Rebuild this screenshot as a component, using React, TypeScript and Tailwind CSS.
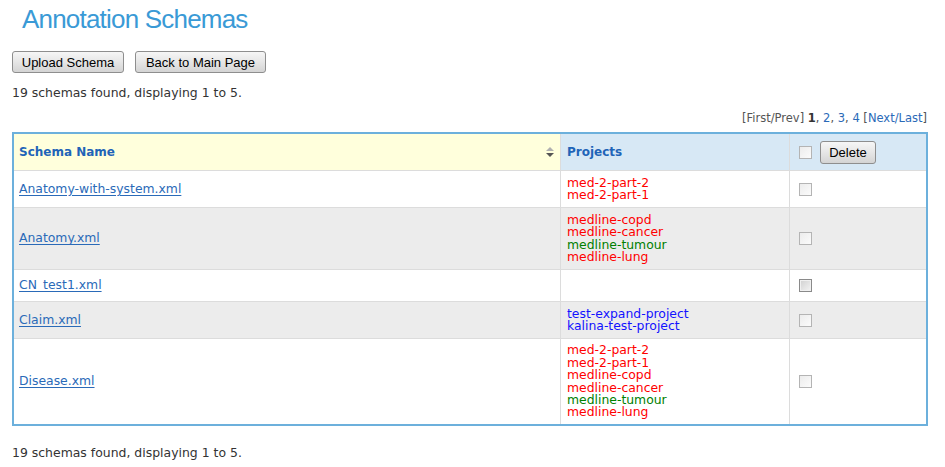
import React from "react";

const RED = "text-[#ff0000]";
const GREEN = "text-[#008000]";
const BLUE = "text-[#1212ff]";

type Proj = { name: string; c: string };

const rows: { name: string; h: string; bg: string; projects: Proj[]; dark?: boolean }[] = [
  {
    name: "Anatomy-with-system.xml",
    h: "h-[37px]",
    bg: "bg-white",
    projects: [
      { name: "med-2-part-2", c: RED },
      { name: "med-2-part-1", c: RED },
    ],
  },
  {
    name: "Anatomy.xml",
    h: "h-[62px]",
    bg: "bg-[#ececec]",
    projects: [
      { name: "medline-copd", c: RED },
      { name: "medline-cancer", c: RED },
      { name: "medline-tumour", c: GREEN },
      { name: "medline-lung", c: RED },
    ],
  },
  {
    name: "CN_test1.xml",
    h: "h-[32px]",
    bg: "bg-white",
    projects: [],
    dark: true,
  },
  {
    name: "Claim.xml",
    h: "h-[37px]",
    bg: "bg-[#ececec]",
    projects: [
      { name: "test-expand-project", c: BLUE },
      { name: "kalina-test-project", c: BLUE },
    ],
  },
  {
    name: "Disease.xml",
    h: "h-[85px]",
    bg: "bg-white",
    projects: [
      { name: "med-2-part-2", c: RED },
      { name: "med-2-part-1", c: RED },
      { name: "medline-copd", c: RED },
      { name: "medline-cancer", c: RED },
      { name: "medline-tumour", c: GREEN },
      { name: "medline-lung", c: RED },
    ],
  },
];

function Check({ dark }: { dark?: boolean }) {
  return (
    <span
      className={
        dark
          ? "block w-[13px] h-[13px] border border-[#8a8a8a] bg-gradient-to-br from-[#d0d0d0] to-[#f4f4f4] shadow-[inset_0_0_0_1px_#f0f0f0]"
          : "block w-[13px] h-[13px] border border-[#b4b4b4] bg-gradient-to-br from-[#ececec] to-[#fbfbfb]"
      }
    />
  );
}

function Btn({ children, className = "" }: { children: React.ReactNode; className?: string }) {
  return (
    <button
      className={
        "h-[22px] border border-[#8e8e8e] rounded-[3px] bg-gradient-to-b from-[#f6f6f6] via-[#e6e6e6] to-[#d4d4d4] text-[13px] text-black leading-none font-['Liberation_Sans',Arial,sans-serif] " +
        className
      }
    >
      {children}
    </button>
  );
}

export default function App() {
  return (
    <div className="w-[945px] h-[467px] bg-white font-['DejaVu_Sans',Verdana,sans-serif] text-[12.4px] text-[#333] overflow-hidden">
      <div className="pl-[22px] pt-[4px] h-[34px] text-[26px] leading-[30px] tracking-[-0.8px] text-[#3a9ad6] font-['Liberation_Sans',Arial,sans-serif]">
        Annotation Schemas
      </div>
      <div className="flex gap-[11px] pl-[12px] mt-[17px]">
        <Btn className="w-[112px]">Upload Schema</Btn>
        <Btn className="w-[131px]">Back to Main Page</Btn>
      </div>
      <div className="pl-[12px] mt-[12px] h-[16px] leading-[16px] text-[12.45px]">
        19 schemas found, displaying 1 to 5.
      </div>
      <div className="flex justify-end pr-[18px] mt-[10px] h-[14px] leading-[14px] text-[11.5px] text-[#555]">
        <span>
          [First/Prev] <b className="text-[#333]">1</b>,{" "}
          <span className="text-[#2a6ab8]">2</span>,{" "}
          <span className="text-[#2a6ab8]">3</span>,{" "}
          <span className="text-[#2a6ab8]">4</span> [
          <span className="text-[#2a6ab8]">Next/Last</span>]
        </span>
      </div>
      <div className="ml-[12px] mt-[7px] w-[916px] border-2 border-[#6cb0dc]">
        {/* header */}
        <div className="flex h-[37px] border-b border-[#dcdcdc] text-[#1f64b8] font-bold text-[12px]">
          <div className="w-[547px] border-r border-[#dcdcdc] bg-[#ffffdc] flex items-center pl-[5px] pr-[6px] justify-between">
            <span>Schema Name</span>
            <svg width="8" height="11" viewBox="0 0 8 11">
              <path d="M4 0 L8 4 L0 4 Z" fill="#b0b0b0" />
              <path d="M0 6 L8 6 L4 10 Z" fill="#555" />
            </svg>
          </div>
          <div className="w-[229px] border-r border-[#dcdcdc] bg-[#d7e8f5] flex items-center pl-[6px]">
            Projects
          </div>
          <div className="w-[136px] bg-[#d7e8f5] flex items-center pl-[9px] gap-[8px]">
            <Check />
            <button className="w-[56px] h-[23px] border border-[#8e8e8e] rounded-[3px] bg-gradient-to-b from-[#f6f6f6] via-[#e6e6e6] to-[#d4d4d4] text-[13px] text-black font-normal leading-none font-['Liberation_Sans',Arial,sans-serif]">
              Delete
            </button>
          </div>
        </div>
        {rows.map((r, i) => (
          <div
            key={r.name}
            className={`flex ${r.h} ${r.bg} ${i < rows.length - 1 ? "border-b border-[#dcdcdc]" : ""}`}
          >
            <div className="w-[547px] border-r border-[#dcdcdc] flex items-center pl-[5px]">
              <a className="text-[#2a6ab8] underline underline-offset-[2px] decoration-1">{r.name}</a>
            </div>
            <div className="w-[229px] border-r border-[#dcdcdc] flex flex-col justify-center pl-[6px] leading-[12.4px] text-[12.4px]">
              {r.projects.map((p, j) => (
                <span key={j} className={p.c}>
                  {p.name}
                </span>
              ))}
            </div>
            <div className="w-[136px] flex items-center pl-[9px]">
              <Check dark={r.dark} />
            </div>
          </div>
        ))}
      </div>
      <div className="pl-[12px] mt-[19px] h-[16px] leading-[16px] text-[12.45px]">
        19 schemas found, displaying 1 to 5.
      </div>
    </div>
  );
}
